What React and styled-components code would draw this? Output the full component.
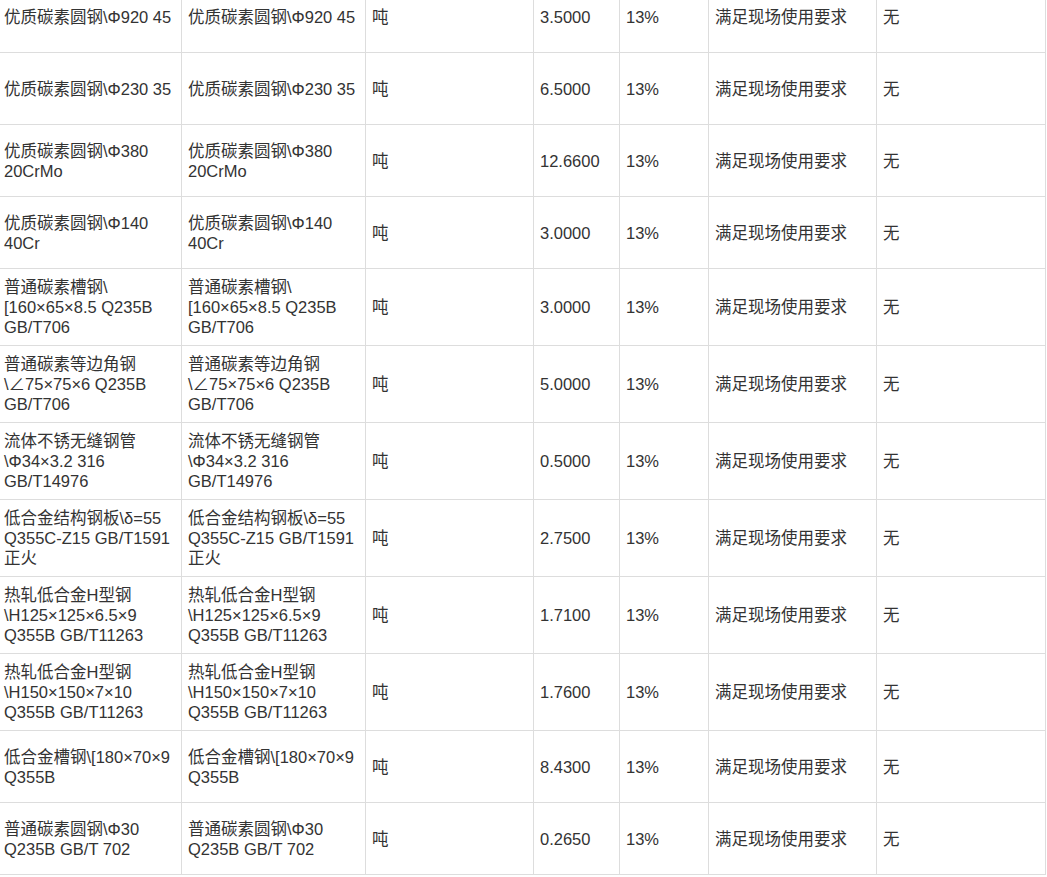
import React from 'react'
import styled, { createGlobalStyle } from 'styled-components'

const GlobalStyle = createGlobalStyle`
  html, body {
    margin: 0;
    padding: 0;
    background: #fff;
    overflow: hidden;
  }
`

const columns = [184, 184, 168, 86, 89, 168, 169]

const rows = [
  ['优质碳素圆钢\\Φ920 45', '3.5000'],
  ['优质碳素圆钢\\Φ230 35', '6.5000'],
  ['优质碳素圆钢\\Φ380 20CrMo', '12.6600'],
  ['优质碳素圆钢\\Φ140 40Cr', '3.0000'],
  ['普通碳素槽钢\\[160×65×8.5 Q235B GB/T706', '3.0000'],
  ['普通碳素等边角钢\\∠75×75×6 Q235B GB/T706', '5.0000'],
  ['流体不锈无缝钢管\\Φ34×3.2 316 GB/T14976', '0.5000'],
  ['低合金结构钢板\\δ=55 Q355C-Z15 GB/T1591 正火', '2.7500'],
  ['热轧低合金H型钢\\H125×125×6.5×9 Q355B GB/T11263', '1.7100'],
  ['热轧低合金H型钢\\H150×150×7×10 Q355B GB/T11263', '1.7600'],
  ['低合金槽钢\\[180×70×9 Q355B', '8.4300'],
  ['普通碳素圆钢\\Φ30 Q235B GB/T 702', '0.2650'],
]

const App = () => {
  return (
    <Wrapper>
      <GlobalStyle />
      <Table>
        <colgroup>
          {columns.map((w, i) => (
            <col key={i} style={{ width: w }} />
          ))}
        </colgroup>
        <tbody>
          {rows.map(([name, qty], i) => (
            <Row key={i}>
              <Cell>{name}</Cell>
              <Cell>{name}</Cell>
              <Cell>吨</Cell>
              <Cell>{qty}</Cell>
              <Cell>13%</Cell>
              <Cell>满足现场使用要求</Cell>
              <Cell>无</Cell>
            </Row>
          ))}
        </tbody>
      </Table>
    </Wrapper>
  )
}

export default App

const Wrapper = styled.div`
  margin: -20px 0 0 -3px;
  width: 1050px;
`

const Table = styled.table`
  width: 1049px;
  table-layout: fixed;
  border-collapse: collapse;
  font-family: 'Liberation Sans', Arial, 'Noto Sans CJK SC', sans-serif;
  font-size: 16.5px;
  line-height: 20px;
  color: #333;
`

const Row = styled.tr``

const Cell = styled.td`
  height: 72px;
  box-sizing: border-box;
  padding: 8px 6px;
  border: 1px solid #ddd;
  vertical-align: middle;
  word-break: normal;
  overflow-wrap: break-word;
`
